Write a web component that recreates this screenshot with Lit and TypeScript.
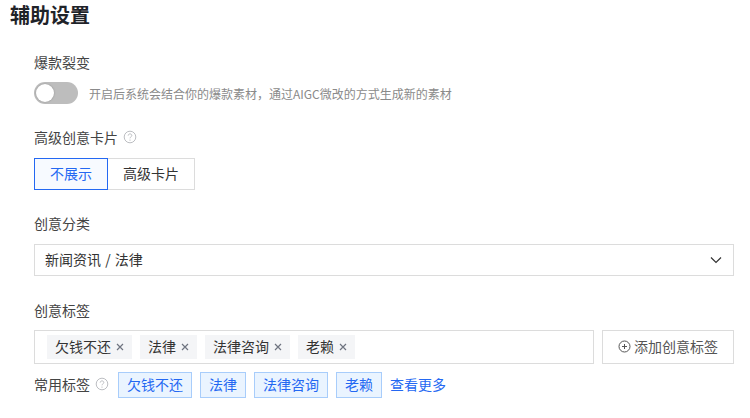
import { LitElement, html, css, svg } from "lit";
import { customElement } from "lit/decorators.js";

const help = html`<svg class="help" width="14" height="14" viewBox="0 0 14 14" fill="none">
  <circle cx="7" cy="7" r="5.8" stroke="#bcbec2" stroke-width="1"/>
  <path d="M5.2 5.6c0-1 .8-1.7 1.8-1.7s1.8.6 1.8 1.6c0 1.4-1.8 1.3-1.8 2.8" stroke="#bcbec2" stroke-width="1"/>
  <circle cx="7" cy="10.1" r=".7" fill="#bcbec2"/>
</svg>`;

const x = svg`<path d="M1 1l6 6M7 1L1 7" stroke="#6f7480" stroke-width="1.2"/>`;

@customElement("app-root")
export class AppRoot extends LitElement {
  static styles = css`
    :host { display: block; width: 750px; height: 418px; overflow: hidden; background: #fff;
      font-family: "Noto Sans CJK SC", "Liberation Sans", sans-serif; font-size: 14px; color: #333; }
    h1 { margin: 0; padding: 0 0 0 10px; height: 30px; line-height: 30px; font-size: 20px; font-weight: 700; color: #1f2329; }
    .form { padding: 0 16px 0 34px; display: flex; flex-direction: column; }
    .label { box-sizing: border-box; height: 20px; padding-bottom: 2px; line-height: 18px; display: flex; align-items: center; gap: 5px; color: #444; }
    .help { display: block; }
    .l1 { margin-top: 23px; }
    .switch-row { margin-top: 9px; height: 22px; display: flex; align-items: center; gap: 11px; }
    .switch { width: 44px; height: 22px; border-radius: 11px; background: #bdbdbd; position: relative; }
    .knob { position: absolute; left: 2px; top: 2px; width: 18px; height: 18px; border-radius: 50%; background: #fff; box-shadow: 0 0 2px rgba(0, 0, 0, 0.25); }
    .hint { font-size: 12px; color: #8a8a8a; }
    .l2 { margin-top: 24px; }
    .group { margin-top: 10px; display: flex; height: 32px; }
    .opt { box-sizing: border-box; height: 32px; padding-bottom: 2px; display: flex; align-items: center; justify-content: center; border: 1px solid #dcdcdc; }
    .opt.on { width: 74px; border-color: #2468f2; color: #2468f2; background: #f7faff; }
    .opt.off { width: 87px; border-left: 0; color: #333; }
    .l3 { margin-top: 24px; }
    .select { box-sizing: border-box; margin-top: 10px; height: 32px; padding: 0 11px 2px 10px; border: 1px solid #dcdcdc; display: flex; align-items: center; justify-content: space-between; color: #333; word-spacing: 1px; }
    .select svg { margin-top: 2px; }
    .l4 { margin-top: 25px; }
    .tag-row { margin-top: 9px; display: flex; gap: 8px; height: 34px; }
    .tags { box-sizing: border-box; width: 560px; border: 1px solid #dcdcdc; display: flex; align-items: center; gap: 8px; padding: 0 12px; }
    .tag { box-sizing: border-box; height: 24px; background: #f4f5f7; padding: 0 8px 2px; display: flex; align-items: center; gap: 5px; color: #333; }
    .tag svg { margin-top: 2px; }
    .add { box-sizing: border-box; width: 132px; border: 1px solid #dcdcdc; padding-bottom: 2px; display: flex; align-items: center; justify-content: center; gap: 3px; color: #555; }
    .common { margin-top: 8px; display: flex; align-items: center; height: 26px; }
    .common .label { width: 84px; flex: none; }
    .chips { display: flex; gap: 8px; align-items: center; }
    .chip { box-sizing: border-box; height: 26px; padding: 0 8px 2px; display: flex; align-items: center; background: #eaf4ff; border: 1px solid #a8cdfb; color: #2468f2; }
    .more { color: #2468f2; padding-bottom: 2px; }
  `;

  render() {
    const tags = ["欠钱不还", "法律", "法律咨询", "老赖"];
    return html`
      <h1>辅助设置</h1>
      <div class="form">
        <div class="label l1">爆款裂变</div>
        <div class="switch-row">
          <div class="switch"><div class="knob"></div></div>
          <span class="hint">开启后系统会结合你的爆款素材，通过AIGC微改的方式生成新的素材</span>
        </div>
        <div class="label l2">高级创意卡片 ${help}</div>
        <div class="group">
          <div class="opt on">不展示</div>
          <div class="opt off">高级卡片</div>
        </div>
        <div class="label l3">创意分类</div>
        <div class="select">
          <span>新闻资讯 / 法律</span>
          <svg width="12" height="8" viewBox="0 0 12 8" fill="none"><path d="M1 1.5l5 5 5-5" stroke="#333" stroke-width="1.2"/></svg>
        </div>
        <div class="label l4">创意标签</div>
        <div class="tag-row">
          <div class="tags">
            ${tags.map((t) => html`<div class="tag">${t}<svg width="8" height="8" viewBox="0 0 8 8" fill="none">${x}</svg></div>`)}
          </div>
          <div class="add">
            <svg width="13" height="13" viewBox="0 0 13 13" fill="none"><circle cx="6.5" cy="6.5" r="5.5" stroke="#555"/><path d="M4 6.5h5M6.5 4v5" stroke="#555"/></svg>
            添加创意标签
          </div>
        </div>
        <div class="common">
          <div class="label">常用标签 ${help}</div>
          <div class="chips">
            ${tags.map((t) => html`<div class="chip">${t}</div>`)}
            <span class="more">查看更多</span>
          </div>
        </div>
      </div>
    `;
  }
}
